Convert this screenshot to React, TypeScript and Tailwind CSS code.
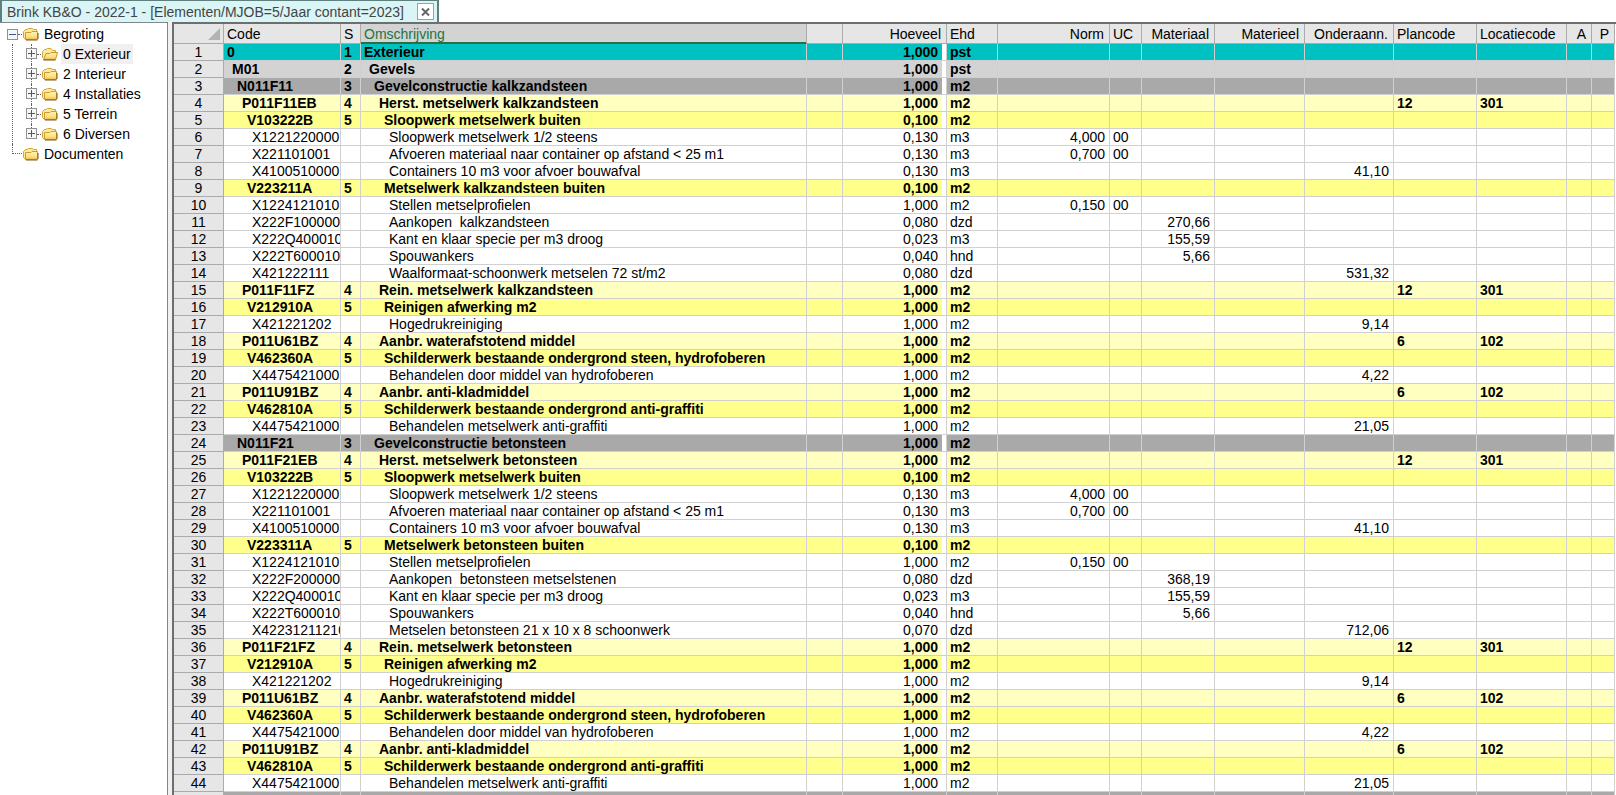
import React, { useState } from 'react'

type Level = 1 | 2 | 3 | 4 | 5 | 6

interface Row {
  level: Level
  code: string
  text: string
  qty: string
  unit: string
  norm?: string
  uc?: string
  material?: string
  equipment?: string
  sub?: string
  plan?: string
  location?: string
}

const rows: Row[] = [
  { level: 1, code: '0', text: 'Exterieur', qty: '1,000', unit: 'pst' },
  { level: 2, code: 'M01', text: 'Gevels', qty: '1,000', unit: 'pst' },
  { level: 3, code: 'N011F11', text: 'Gevelconstructie kalkzandsteen', qty: '1,000', unit: 'm2' },
  { level: 4, code: 'P011F11EB', text: 'Herst. metselwerk kalkzandsteen', qty: '1,000', unit: 'm2', plan: '12', location: '301' },
  { level: 5, code: 'V103222B', text: 'Sloopwerk metselwerk buiten', qty: '0,100', unit: 'm2' },
  { level: 6, code: 'X1221220000', text: 'Sloopwerk metselwerk 1/2 steens', qty: '0,130', unit: 'm3', norm: '4,000', uc: '00' },
  { level: 6, code: 'X221101001', text: 'Afvoeren materiaal naar container op afstand < 25 m1', qty: '0,130', unit: 'm3', norm: '0,700', uc: '00' },
  { level: 6, code: 'X4100510000', text: 'Containers 10 m3 voor afvoer bouwafval', qty: '0,130', unit: 'm3', sub: '41,10' },
  { level: 5, code: 'V223211A', text: 'Metselwerk kalkzandsteen buiten', qty: '0,100', unit: 'm2' },
  { level: 6, code: 'X1224121010', text: 'Stellen metselprofielen', qty: '1,000', unit: 'm2', norm: '0,150', uc: '00' },
  { level: 6, code: 'X222F100000', text: 'Aankopen  kalkzandsteen', qty: '0,080', unit: 'dzd', material: '270,66' },
  { level: 6, code: 'X222Q400010', text: 'Kant en klaar specie per m3 droog', qty: '0,023', unit: 'm3', material: '155,59' },
  { level: 6, code: 'X222T600010', text: 'Spouwankers', qty: '0,040', unit: 'hnd', material: '5,66' },
  { level: 6, code: 'X421222111', text: 'Waalformaat-schoonwerk metselen 72 st/m2', qty: '0,080', unit: 'dzd', sub: '531,32' },
  { level: 4, code: 'P011F11FZ', text: 'Rein. metselwerk kalkzandsteen', qty: '1,000', unit: 'm2', plan: '12', location: '301' },
  { level: 5, code: 'V212910A', text: 'Reinigen afwerking m2', qty: '1,000', unit: 'm2' },
  { level: 6, code: 'X421221202', text: 'Hogedrukreiniging', qty: '1,000', unit: 'm2', sub: '9,14' },
  { level: 4, code: 'P011U61BZ', text: 'Aanbr. waterafstotend middel', qty: '1,000', unit: 'm2', plan: '6', location: '102' },
  { level: 5, code: 'V462360A', text: 'Schilderwerk bestaande ondergrond steen, hydrofoberen', qty: '1,000', unit: 'm2' },
  { level: 6, code: 'X4475421000', text: 'Behandelen door middel van hydrofoberen', qty: '1,000', unit: 'm2', sub: '4,22' },
  { level: 4, code: 'P011U91BZ', text: 'Aanbr. anti-kladmiddel', qty: '1,000', unit: 'm2', plan: '6', location: '102' },
  { level: 5, code: 'V462810A', text: 'Schilderwerk bestaande ondergrond anti-graffiti', qty: '1,000', unit: 'm2' },
  { level: 6, code: 'X4475421000', text: 'Behandelen metselwerk anti-graffiti', qty: '1,000', unit: 'm2', sub: '21,05' },
  { level: 3, code: 'N011F21', text: 'Gevelconstructie betonsteen', qty: '1,000', unit: 'm2' },
  { level: 4, code: 'P011F21EB', text: 'Herst. metselwerk betonsteen', qty: '1,000', unit: 'm2', plan: '12', location: '301' },
  { level: 5, code: 'V103222B', text: 'Sloopwerk metselwerk buiten', qty: '0,100', unit: 'm2' },
  { level: 6, code: 'X1221220000', text: 'Sloopwerk metselwerk 1/2 steens', qty: '0,130', unit: 'm3', norm: '4,000', uc: '00' },
  { level: 6, code: 'X221101001', text: 'Afvoeren materiaal naar container op afstand < 25 m1', qty: '0,130', unit: 'm3', norm: '0,700', uc: '00' },
  { level: 6, code: 'X4100510000', text: 'Containers 10 m3 voor afvoer bouwafval', qty: '0,130', unit: 'm3', sub: '41,10' },
  { level: 5, code: 'V223311A', text: 'Metselwerk betonsteen buiten', qty: '0,100', unit: 'm2' },
  { level: 6, code: 'X1224121010', text: 'Stellen metselprofielen', qty: '1,000', unit: 'm2', norm: '0,150', uc: '00' },
  { level: 6, code: 'X222F200000', text: 'Aankopen  betonsteen metselstenen', qty: '0,080', unit: 'dzd', material: '368,19' },
  { level: 6, code: 'X222Q400010', text: 'Kant en klaar specie per m3 droog', qty: '0,023', unit: 'm3', material: '155,59' },
  { level: 6, code: 'X222T600010', text: 'Spouwankers', qty: '0,040', unit: 'hnd', material: '5,66' },
  { level: 6, code: 'X42231211210', text: 'Metselen betonsteen 21 x 10 x 8 schoonwerk', qty: '0,070', unit: 'dzd', sub: '712,06' },
  { level: 4, code: 'P011F21FZ', text: 'Rein. metselwerk betonsteen', qty: '1,000', unit: 'm2', plan: '12', location: '301' },
  { level: 5, code: 'V212910A', text: 'Reinigen afwerking m2', qty: '1,000', unit: 'm2' },
  { level: 6, code: 'X421221202', text: 'Hogedrukreiniging', qty: '1,000', unit: 'm2', sub: '9,14' },
  { level: 4, code: 'P011U61BZ', text: 'Aanbr. waterafstotend middel', qty: '1,000', unit: 'm2', plan: '6', location: '102' },
  { level: 5, code: 'V462360A', text: 'Schilderwerk bestaande ondergrond steen, hydrofoberen', qty: '1,000', unit: 'm2' },
  { level: 6, code: 'X4475421000', text: 'Behandelen door middel van hydrofoberen', qty: '1,000', unit: 'm2', sub: '4,22' },
  { level: 4, code: 'P011U91BZ', text: 'Aanbr. anti-kladmiddel', qty: '1,000', unit: 'm2', plan: '6', location: '102' },
  { level: 5, code: 'V462810A', text: 'Schilderwerk bestaande ondergrond anti-graffiti', qty: '1,000', unit: 'm2' },
  { level: 6, code: 'X4475421000', text: 'Behandelen metselwerk anti-graffiti', qty: '1,000', unit: 'm2', sub: '21,05' },
]

const rowStyle: Record<Level, string> = {
  1: 'bg-[#00c1c1] font-bold',
  2: 'bg-[#d3d3d3] font-bold',
  3: 'bg-[#a9a9a9] font-bold',
  4: 'bg-[#ffffc0] font-bold',
  5: 'bg-[#ffff8c] font-bold',
  6: 'bg-white',
}

const indent: Record<Level, string> = {
  1: 'pl-[3px]',
  2: 'pl-[8px]',
  3: 'pl-[13px]',
  4: 'pl-[18px]',
  5: 'pl-[23px]',
  6: 'pl-[28px]',
}

const columns = [
  { label: 'Code', width: 'w-[117px]', align: 'text-left pl-[3px]' },
  { label: 'S', width: 'w-[20px]', align: 'text-left pl-[3px]' },
  { label: 'Omschrijving', width: '', align: 'text-left pl-[3px]' },
  { label: '', width: 'w-[36px]', align: 'text-left' },
  { label: 'Hoeveel', width: 'w-[104px]', align: 'text-right pr-[5px]' },
  { label: 'Ehd', width: 'w-[51px]', align: 'text-left pl-[3px]' },
  { label: 'Norm', width: 'w-[112px]', align: 'text-right pr-[5px]' },
  { label: 'UC', width: 'w-[32px]', align: 'text-left pl-[3px]' },
  { label: 'Materiaal', width: 'w-[73px]', align: 'text-right pr-[5px]' },
  { label: 'Materieel', width: 'w-[90px]', align: 'text-right pr-[5px]' },
  { label: 'Onderaann.', width: 'w-[89px]', align: 'text-right pr-[5px]' },
  { label: 'Plancode', width: 'w-[83px]', align: 'text-left pl-[3px]' },
  { label: 'Locatiecode', width: 'w-[90px]', align: 'text-left pl-[3px]' },
  { label: 'A', width: 'w-[25px]', align: 'text-right pr-[5px]' },
  { label: 'P', width: 'w-[23px]', align: 'text-right pr-[5px]' },
]

const cell = 'h-[17px] border-r border-b border-[#d0d0d0] p-0 leading-4 whitespace-pre overflow-hidden'

const Folder: React.FC<{ open?: boolean }> = ({ open }) => (
  <svg width="16" height="14" viewBox="0 0 16 14" className="shrink-0" aria-hidden="true">
    <defs>
      <linearGradient id="folder" x1="0" y1="0" x2="0" y2="1">
        <stop offset="0" stopColor="#fff3ae" />
        <stop offset="0.6" stopColor="#fde28a" />
        <stop offset="1" stopColor="#f0bf4e" />
      </linearGradient>
    </defs>
    {open ? (
      <>
        <path d="M0.5 11V4.5L2.5 2.5H4L5.5 1.5H9L10.5 3.5H13.5V6" fill="#fdeb9c" stroke="#d9a437" />
        <path d="M1.5 12.5L4 6.5H8L9 5.5H15.5L13.5 12.5Z" fill="url(#folder)" stroke="#c9922a" />
        <path d="M1.5 13H13.5" stroke="#7b5a1e" />
      </>
    ) : (
      <>
        <path d="M2.5 12.5L0.5 10.5V4.5L2.5 2.5H4L5.5 1.5H9L10.5 2.5H13.5V5" fill="#fdeb9c" stroke="#d9a437" />
        <path d="M2.5 12.5V5.5H8L9 4.5H14.5V12.5Z" fill="url(#folder)" stroke="#d19b31" />
        <path d="M3 13H14.5M15 12V6" fill="none" stroke="#7b5a1e" />
      </>
    )}
  </svg>
)

const Expander: React.FC<{ open: boolean; label: string; onClick: () => void }> = ({ open, label, onClick }) => (
  <button type="button" aria-label={label} aria-expanded={open} onClick={onClick} className="block size-[11px] shrink-0">
    <svg width="11" height="11" viewBox="0 0 11 11">
      <rect x="0.5" y="0.5" width="10" height="10" fill="#f6f6f6" stroke="#919191" />
      <path d={open ? 'M2 5.5H9' : 'M2 5.5H9M5.5 2V9'} stroke="#3c56a0" />
    </svg>
  </button>
)

const nodes = ['0 Exterieur', '2 Interieur', '4 Installaties', '5 Terrein', '6 Diversen']

const TreePanel: React.FC = () => {
  const [open, setOpen] = useState(true)
  const [expanded, setExpanded] = useState<string[]>([])
  const [selected, setSelected] = useState('0 Exterieur')

  const toggle = (name: string) =>
    setExpanded(prev => (prev.includes(name) ? prev.filter(n => n !== name) : [...prev, name]))

  return (
    <nav aria-label="Begroting" className="w-[168px] shrink-0 border-t border-r border-[#82878f] bg-white pt-px pl-[7px]">
      <ul>
        <li>
          <div className="flex h-5 items-center">
            <Expander open={open} label="Begroting" onClick={() => setOpen(!open)} />
            <span className="mr-px w-[4px] border-t border-dotted border-[#606060]" />
            <Folder />
            <button type="button" onClick={() => setSelected('Begroting')} className="ml-[3px] h-5 px-[2px]">Begroting</button>
          </div>
          {open && (
            <ul className="ml-[5px] border-l border-dotted border-[#606060] pl-[13px]">
              {nodes.map(name => (
                <li key={name} className="flex h-5 items-center">
                  <div className="flex h-5 flex-col items-center">
                    <span className="h-[4px] border-l border-dotted border-[#606060]" />
                    <Expander open={expanded.includes(name)} label={name} onClick={() => toggle(name)} />
                    {name !== nodes[nodes.length - 1] && (
                      <span className="h-[5px] border-l border-dotted border-[#606060]" />
                    )}
                  </div>
                  <span className="mr-px w-[4px] border-t border-dotted border-[#606060]" />
                  <Folder open={selected === name} />
                  <button
                    type="button"
                    onClick={() => setSelected(name)}
                    className={`ml-[3px] h-5 px-[2px] ${selected === name ? 'bg-[#f0f0f0]' : ''}`}
                  >
                    {name}
                  </button>
                </li>
              ))}
            </ul>
          )}
        </li>
        <li className="ml-[5px] flex h-5 items-center">
          <span className="h-[10px] w-[10px] self-start border-b border-l border-dotted border-[#606060]" />
          <span className="ml-px flex"><Folder /></span>
          <button type="button" onClick={() => setSelected('Documenten')} className="ml-[3px] h-5 px-[2px]">Documenten</button>
        </li>
      </ul>
    </nav>
  )
}

const BudgetTable: React.FC = () => (
  <table className="w-full table-fixed border-separate border-spacing-0">
    <colgroup>
      <col className="w-[50px]" />
      {columns.map((c, i) => (
        <col key={i} className={c.width} />
      ))}
    </colgroup>
    <thead>
      <tr className="bg-[#e6e6e6]">
        <th className="h-5 border-r border-b border-[#ababab] p-0">
          <svg width="12" height="12" viewBox="0 0 12 12" className="mr-[3px] ml-auto" aria-hidden="true">
            <path d="M12 0V12H0Z" fill="#b3b3b3" />
          </svg>
        </th>
        {columns.map((c, i) => (
          <th
            key={i}
            scope="col"
            className={`h-5 border-r border-b p-0 leading-[18px] font-normal whitespace-nowrap ${c.align} ${
              c.label === 'Omschrijving'
                ? 'border-r-[#ababab] border-b-[#217346] bg-[#d3d3d3] text-[#217346] shadow-[inset_0_-1px_0_#217346]'
                : 'border-[#ababab]'
            }`}
          >
            {c.label}
          </th>
        ))}
      </tr>
    </thead>
    <tbody>
      {rows.map((r, i) => (
        <tr key={i} className={rowStyle[r.level]}>
          <th scope="row" className="h-[17px] border-r border-b border-[#ababab] bg-[#e6e6e6] p-0 text-center leading-4 font-normal">
            {i + 1}
          </th>
          <td className={`${cell} ${indent[r.level]}`}>{r.code}</td>
          <td className={`${cell} pl-[3px]`}>{r.level < 6 ? r.level : ''}</td>
          <td className={`${cell} ${indent[r.level]}`}>{r.text}</td>
          <td className={cell} />
          <td className={`${cell} text-right`}>
            <div className="border-r-4 border-white pr-[4px]">{r.qty}</div>
          </td>
          <td className={`${cell} pl-[3px]`}>{r.unit}</td>
          <td className={`${cell} pr-[4px] text-right`}>{r.norm}</td>
          <td className={`${cell} pl-[3px]`}>{r.uc}</td>
          <td className={`${cell} pr-[4px] text-right`}>{r.material}</td>
          <td className={`${cell} pr-[4px] text-right`}>{r.equipment}</td>
          <td className={`${cell} pr-[4px] text-right`}>{r.sub}</td>
          <td className={`${cell} pl-[3px]`}>{r.plan}</td>
          <td className={`${cell} pl-[3px]`}>{r.location}</td>
          <td className={cell} />
          <td className={cell} />
        </tr>
      ))}
      {/* next group, cut off by the window */}
      <tr className={rowStyle[3]}>
        <th className="h-[17px] border-r border-[#ababab] bg-[#e6e6e6]" />
        {columns.map((_, i) => (
          <td key={i} className={cell} />
        ))}
      </tr>
    </tbody>
  </table>
)

const App: React.FC = () => {
  return (
    <div className="flex h-screen flex-col overflow-hidden bg-white font-['Liberation_Sans',Arial,sans-serif] text-[14px] text-black">
      <header className="flex h-[22px] shrink-0">
        <div className="flex items-center border-t border-r-2 border-l-2 border-[#5f7f7f] bg-[#d9f5f5] pr-[3px] pl-[5px]">
          <h1 className="text-[14px] leading-5 whitespace-nowrap text-[#444444]">
            Brink KB&amp;O - 2022-1 - [Elementen/MJOB=5/Jaar contant=2023]
          </h1>
          <button type="button" aria-label="Sluiten" className="ml-[13px] flex size-[17px] items-center justify-center border border-[#a0a0a0] bg-white">
            <svg width="9" height="8" viewBox="0 0 9 8">
              <path d="M1 0.5L8 7.5M8 0.5L1 7.5" stroke="#666666" strokeWidth="2" />
            </svg>
          </button>
        </div>
      </header>
      <div className="flex min-h-0 flex-1 bg-[#f0f0f0]">
        <TreePanel />
        <main className="ml-[4px] min-w-0 flex-1 overflow-hidden border-t-2 border-l-2 border-[#6e6e6e] bg-white pr-px">
          <BudgetTable />
        </main>
      </div>
    </div>
  )
}

export default App
